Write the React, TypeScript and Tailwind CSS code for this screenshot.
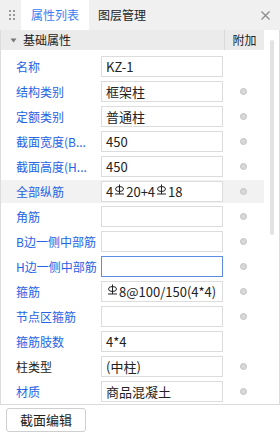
import React from 'react';

type Part = string | { bar: true };

interface Row {
  label: string;
  value: Part[];
  dot: boolean;
  dark?: boolean;
  active?: boolean;
  focused?: boolean;
}

const rows: Row[] = [
  { label: '名称', value: ['KZ-1'], dot: false },
  { label: '结构类别', value: ['框架柱'], dot: true },
  { label: '定额类别', value: ['普通柱'], dot: true },
  { label: '截面宽度(B...', value: ['450'], dot: true },
  { label: '截面高度(H...', value: ['450'], dot: true },
  { label: '全部纵筋', value: ['4', { bar: true }, '20+4', { bar: true }, '18'], dot: true, active: true },
  { label: '角筋', value: [], dot: true },
  { label: 'B边一侧中部筋', value: [], dot: true },
  { label: 'H边一侧中部筋', value: [], dot: true, focused: true },
  { label: '箍筋', value: [{ bar: true }, '8@100/150(4*4)'], dot: true },
  { label: '节点区箍筋', value: [], dot: true },
  { label: '箍筋肢数', value: ['4*4'], dot: false },
  { label: '柱类型', value: ['(中柱)'], dot: true, dark: true },
  { label: '材质', value: ['商品混凝土'], dot: true },
];

// HRB400 steel grade symbol
const RebarMark = () => (
  <svg width="11" height="13" viewBox="0 0 11 13" className="mx-[1px] -mt-[3px] shrink-0">
    <line x1="5.5" y1="0.5" x2="5.5" y2="10" stroke="#222" strokeWidth="1" />
    <ellipse cx="5.5" cy="5" rx="4" ry="2.5" fill="none" stroke="#222" strokeWidth="1" />
    <line x1="1" y1="10" x2="10" y2="10" stroke="#222" strokeWidth="1" />
  </svg>
);

const DragHandle = () => (
  <svg width="8" height="12" viewBox="0 0 8 12">
    {[0, 1].map((c) =>
      [0, 1, 2].map((r) => <rect key={`${c}-${r}`} x={c * 4 + 1} y={r * 4 + 1} width="2" height="2" fill="#9a9a9a" />)
    )}
  </svg>
);

export default function App() {
  return (
    <div className="w-[280px] h-[436px] bg-white font-['Noto_Sans_CJK_SC','Noto_Sans',sans-serif] text-[12px] overflow-hidden">
      {/* tab bar */}
      <div className="flex items-center h-[30px] bg-[#f0f0f0]">
        <div className="w-[21px] flex justify-center pl-[2px]">
          <DragHandle />
        </div>
        <div className="h-full w-[68px] bg-white flex items-center justify-center text-[#3a7ef2]">属性列表</div>
        <div className="pl-[9px] text-[#222]">图层管理</div>
        <div className="ml-auto mr-[10px]">
          <svg width="9" height="9" viewBox="0 0 9 9">
            <path d="M0.5 0.5 L8.5 8.5 M8.5 0.5 L0.5 8.5" stroke="#8a8a8a" strokeWidth="1.2" />
          </svg>
        </div>
      </div>

      {/* property grid */}
      <div className="border-x border-b border-[#dcdcdc] h-[375px] flex">
        <div className="w-[263px] flex flex-col">
          <div className="h-[20px] flex bg-[#ebebeb] items-center">
            <div className="flex-1 flex items-center text-[#222]">
              <svg width="7" height="5" viewBox="0 0 7 5" className="ml-[9px] mr-[6px]">
                <path d="M0.5 0.5 L6.5 0.5 L3.5 4.5 Z" fill="#777" />
              </svg>
              基础属性
            </div>
            <div className="w-[40px] h-full border-l border-[#dadada] flex items-center justify-center text-[#222]">附加</div>
          </div>
          <div className="flex flex-col gap-[2px] pt-[5px]">
            {rows.map((r) => (
              <div key={r.label} className={`h-[23px] flex items-center ${r.active ? 'bg-[#f2f2f2]' : ''}`}>
                <div className={`w-[100px] pl-[15px] whitespace-nowrap overflow-hidden ${r.dark ? 'text-[#222]' : 'text-[#2563e6]'}`}>
                  {r.label}
                </div>
                <div
                  className={`w-[122px] h-[21px] bg-white border flex items-center pl-[4px] text-[#222] text-[13px] whitespace-nowrap ${
                    r.focused ? 'border-[#5b8ee0]' : 'border-[#dcdcdc]'
                  }`}
                >
                  {r.value.map((p, i) => (typeof p === 'string' ? <span key={i}>{p}</span> : <RebarMark key={i} />))}
                </div>
                <div className="flex-1 flex justify-center">
                  {r.dot && <div className="w-[7px] h-[7px] rounded-full bg-[#d8d8d8] border border-[#c2c2c2]" />}
                </div>
              </div>
            ))}
          </div>
        </div>
        <div className="flex-1 flex justify-center pt-[10px]">
          <div className="w-[4px] h-[195px] rounded-full bg-[#e2e2e2]" />
        </div>
      </div>

      <div className="px-[6px] pt-[3px]">
        <button className="w-[80px] h-[24px] border border-[#cfcfcf] rounded-[3px] bg-white text-[13px] text-[#222] flex items-center justify-center">
          截面编辑
        </button>
      </div>
    </div>
  );
}
